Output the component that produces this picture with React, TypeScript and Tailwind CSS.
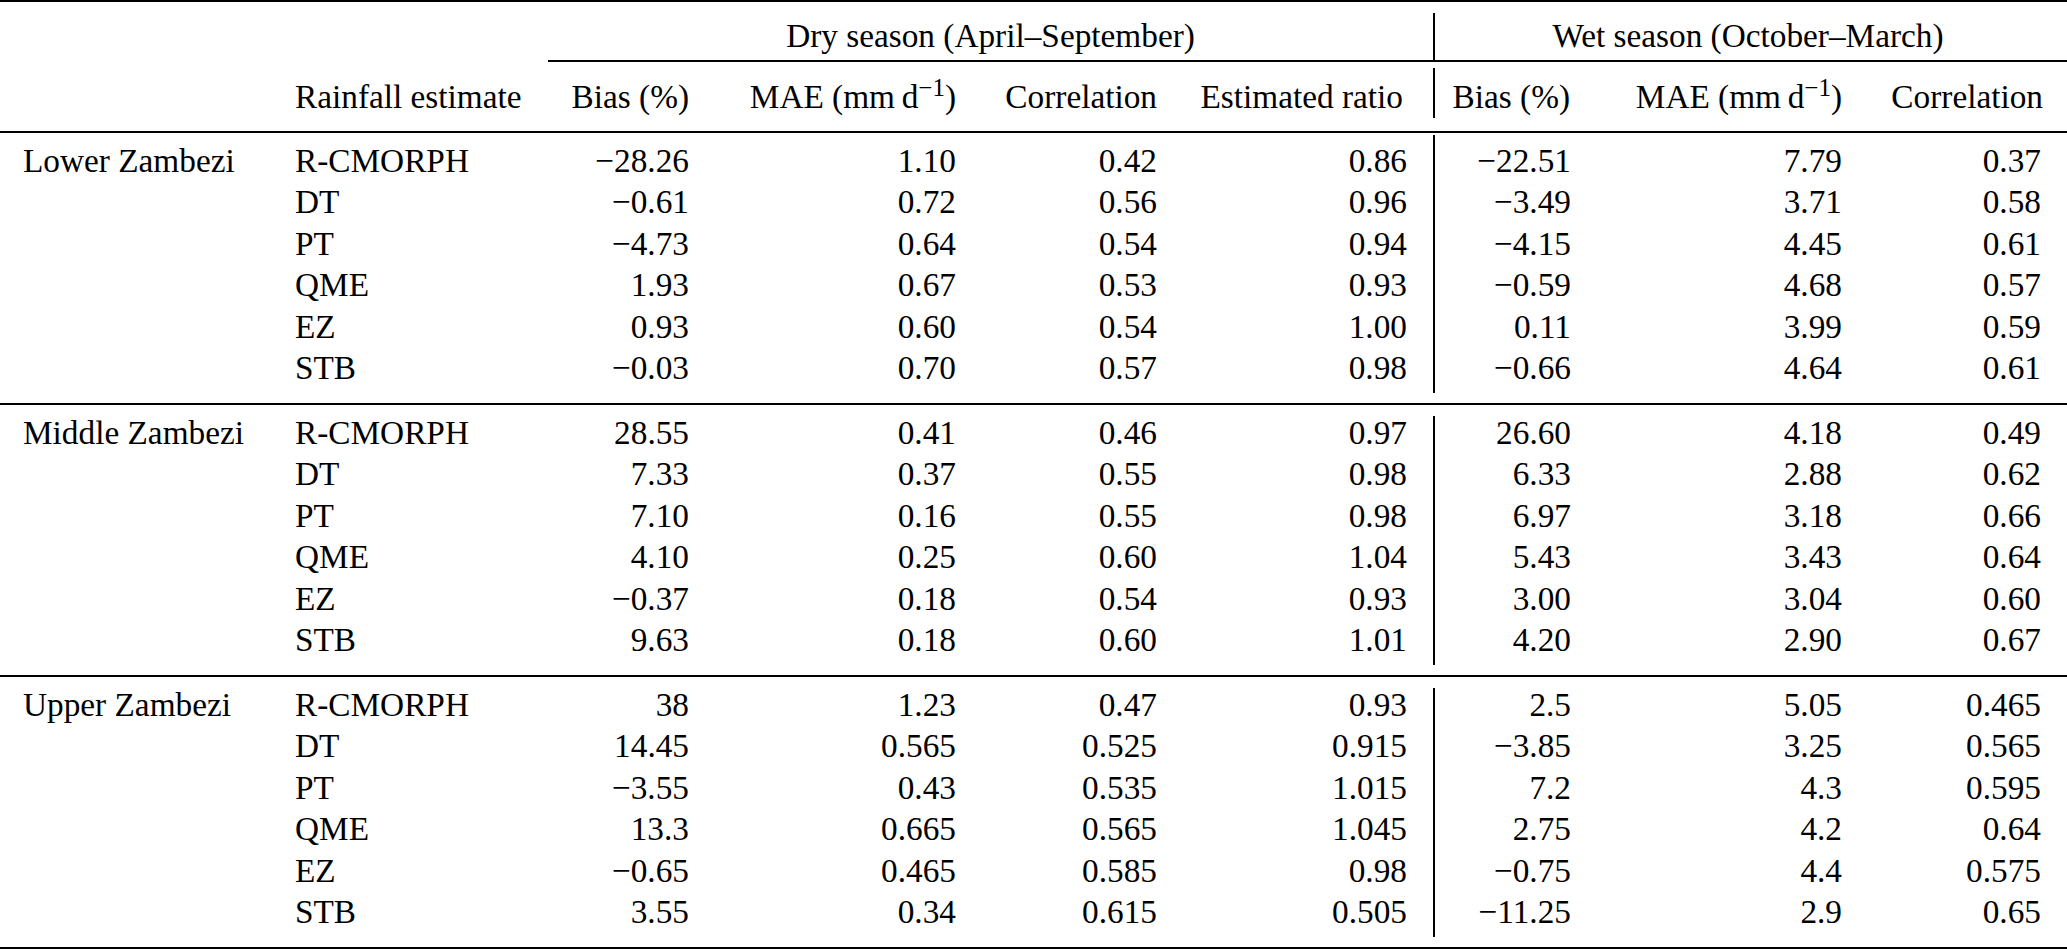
const cols =
  "grid grid-cols-[295px_253px_141px_267px_201px_276px_139px_270px_225px]";

type Row = [string, string, string, string, string, string, string, string];

const sections: { region: string; rows: Row[] }[] = [
  {
    region: "Lower Zambezi",
    rows: [
      ["R-CMORPH", "−28.26", "1.10", "0.42", "0.86", "−22.51", "7.79", "0.37"],
      ["DT", "−0.61", "0.72", "0.56", "0.96", "−3.49", "3.71", "0.58"],
      ["PT", "−4.73", "0.64", "0.54", "0.94", "−4.15", "4.45", "0.61"],
      ["QME", "1.93", "0.67", "0.53", "0.93", "−0.59", "4.68", "0.57"],
      ["EZ", "0.93", "0.60", "0.54", "1.00", "0.11", "3.99", "0.59"],
      ["STB", "−0.03", "0.70", "0.57", "0.98", "−0.66", "4.64", "0.61"],
    ],
  },
  {
    region: "Middle Zambezi",
    rows: [
      ["R-CMORPH", "28.55", "0.41", "0.46", "0.97", "26.60", "4.18", "0.49"],
      ["DT", "7.33", "0.37", "0.55", "0.98", "6.33", "2.88", "0.62"],
      ["PT", "7.10", "0.16", "0.55", "0.98", "6.97", "3.18", "0.66"],
      ["QME", "4.10", "0.25", "0.60", "1.04", "5.43", "3.43", "0.64"],
      ["EZ", "−0.37", "0.18", "0.54", "0.93", "3.00", "3.04", "0.60"],
      ["STB", "9.63", "0.18", "0.60", "1.01", "4.20", "2.90", "0.67"],
    ],
  },
  {
    region: "Upper Zambezi",
    rows: [
      ["R-CMORPH", "38", "1.23", "0.47", "0.93", "2.5", "5.05", "0.465"],
      ["DT", "14.45", "0.565", "0.525", "0.915", "−3.85", "3.25", "0.565"],
      ["PT", "−3.55", "0.43", "0.535", "1.015", "7.2", "4.3", "0.595"],
      ["QME", "13.3", "0.665", "0.565", "1.045", "2.75", "4.2", "0.64"],
      ["EZ", "−0.65", "0.465", "0.585", "0.98", "−0.75", "4.4", "0.575"],
      ["STB", "3.55", "0.34", "0.615", "0.505", "−11.25", "2.9", "0.65"],
    ],
  },
];

function Mae() {
  return (
    <>
      MAE (mm{"\u2009"}d<sup>−1</sup>)
    </>
  );
}

function Section({
  region,
  rows,
  first,
}: {
  region: string;
  rows: Row[];
  first?: boolean;
}) {
  return (
    <div className="border-b-2 border-black pb-[10.5px]">
      {/* gap under the rule; the bar only runs through it below the header */}
      <div className={`${cols} h-[10.5px]`}>
        <div className="col-span-6" />
        {first && <div className="mt-[2px] border-l-2 border-black" />}
      </div>
      {rows.map((r, i) => (
        <div
          key={r[0]}
          className={`${cols} h-[41.5px] leading-[34.8px] whitespace-nowrap`}
        >
          <div className="pl-[23px]">{i === 0 ? region : ""}</div>
          <div>{r[0]}</div>
          <div className="text-right">{r[1]}</div>
          <div className="text-right">{r[2]}</div>
          <div className="text-right">{r[3]}</div>
          <div className="text-right pr-[26px]">{r[4]}</div>
          <div className="text-right pr-[1px] border-l-2 border-black">
            {r[5]}
          </div>
          <div className="text-right">{r[6]}</div>
          <div className="text-right pr-[26px]">{r[7]}</div>
        </div>
      ))}
    </div>
  );
}

export default function App() {
  return (
    <div className="w-[2067px] min-h-[950px] bg-white text-black font-['Liberation_Serif','Times_New_Roman',serif] text-[33.3px]">
      <div className="border-t-2 border-black">
        <div className={`${cols} h-[60px] whitespace-nowrap`}>
          <div className="col-span-2" />
          <div className="col-span-4 mt-[11px] h-[49px] border-b-2 border-black text-center leading-[45.4px]">
            Dry season (April–September)
          </div>
          <div className="col-span-3 mt-[11px] h-[49px] border-b-2 border-l-2 border-black text-center leading-[45.4px] pr-[6px]">
            Wet season (October–March)
          </div>
        </div>

        <div
          className={`${cols} h-[71px] border-b-2 border-black whitespace-nowrap`}
        >
          <div className="mt-[6px] h-[50px] pt-[8px] leading-[41.4px]" />
          <div className="mt-[6px] h-[50px] pt-[8px] leading-[41.4px]">
            Rainfall estimate
          </div>
          <div className="mt-[6px] h-[50px] pt-[8px] leading-[41.4px] text-right">
            Bias (%)
          </div>
          <div className="mt-[6px] h-[50px] pt-[8px] leading-[41.4px] text-right">
            <Mae />
          </div>
          <div className="mt-[6px] h-[50px] pt-[8px] leading-[41.4px] text-right">
            Correlation
          </div>
          <div className="mt-[6px] h-[50px] pt-[8px] leading-[41.4px] text-right pr-[30px]">
            Estimated ratio
          </div>
          <div className="mt-[6px] h-[50px] pt-[8px] leading-[41.4px] text-right pr-[2px] border-l-2 border-black">
            Bias (%)
          </div>
          <div className="mt-[6px] h-[50px] pt-[8px] leading-[41.4px] text-right">
            <Mae />
          </div>
          <div className="mt-[6px] h-[50px] pt-[8px] leading-[41.4px] text-right pr-[24px]">
            Correlation
          </div>
        </div>

        {sections.map((s, i) => (
          <Section key={s.region} region={s.region} rows={s.rows} first={i === 0} />
        ))}
      </div>
    </div>
  );
}
